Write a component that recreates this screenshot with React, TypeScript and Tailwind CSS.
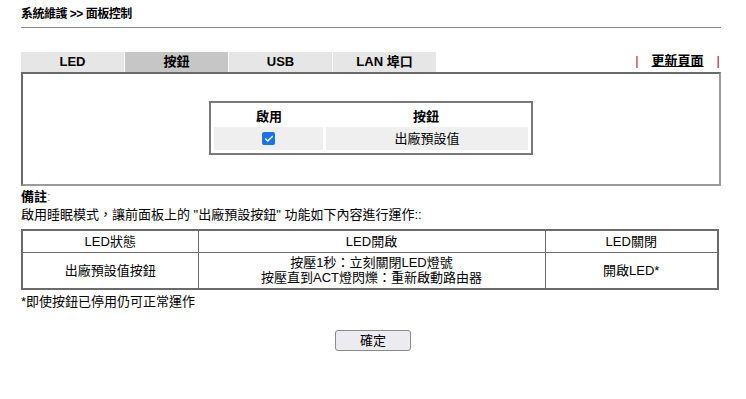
import { Check } from 'lucide-react';

const font = { fontFamily: '"Liberation Sans", Arial, "Noto Sans CJK TC", sans-serif' };

export default function App() {
  const tabs = ['LED', '按鈕', 'USB', 'LAN 埠口'];

  return (
    <div className="w-[746px] h-[399px] bg-white text-black text-[13px]" style={font}>
      <div className="px-[21px] pt-[6px]">
        <h1 className="text-[12px] font-bold leading-[16px] tracking-[-0.5px]">系統維護 &gt;&gt; 面板控制</h1>
        <div className="mt-[5px] h-px bg-[#8a8a8a] w-[700px]" />

        {/* tabs */}
        <div className="mt-[24px] flex h-[20px] w-[699px]">
          {tabs.map((t, i) => (
            <div
              key={t}
              className={
                'w-[103px] mr-px h-[20px] flex items-center justify-center font-bold text-[13px] ' +
                (i === 1 ? 'bg-[#c6c6c6]' : 'bg-[#e6e6e6]')
              }
            >
              {t}
            </div>
          ))}
          <div className="ml-auto flex items-start gap-[13px] h-[20px] leading-[18px] font-bold text-[13px]">
            <span className="text-[#a8102a] font-normal">|</span>
            <span className="underline">更新頁面</span>
            <span className="text-[#a8102a] font-normal">|</span>
          </div>
        </div>

        {/* panel */}
        <div className="w-[700px] h-[114px] border-2 border-[#6b6b6b] border-b-[#9a9a9a] border-r-[#9a9a9a] flex items-start justify-center pt-[27px]">
          <div className="w-[324px] border-2 border-[#7a7a7a] p-[3px]">
            <div className="flex font-bold text-[13px] h-[21px] items-center">
              <div className="w-[110px] text-center">啟用</div>
              <div className="flex-1 text-center">按鈕</div>
            </div>
            <div className="flex gap-[3px] h-[23px]">
              <div className="w-[109px] bg-[#efefef] flex items-center justify-center">
                <span className="w-[13px] h-[13px] rounded-[2px] bg-[#1a73e8] flex items-center justify-center">
                  <Check size={10} strokeWidth={3.5} className="text-white" />
                </span>
              </div>
              <div className="flex-1 bg-[#efefef] flex items-center justify-center">出廠預設值</div>
            </div>
          </div>
        </div>

        {/* notes */}
        <div className="mt-[2px] font-bold leading-[18px]">
          備註<span className="font-normal text-[#888]">:</span>
        </div>
        <div className="leading-[17px]">啟用睡眠模式，讓前面板上的 "出廠預設按鈕" 功能如下內容進行運作::</div>
        <table className="mt-[6px] w-[698px] border-collapse border-2 border-[#6b6b6b] text-[13px]">
          <tbody>
            <tr className="h-[22px]">
              <td className="w-[176px] border border-[#6b6b6b] text-center">LED狀態</td>
              <td className="w-[347px] border border-[#6b6b6b] text-center">LED開啟</td>
              <td className="border border-[#6b6b6b] text-center">LED關閉</td>
            </tr>
            <tr className="h-[37px]">
              <td className="border border-[#6b6b6b] text-center">出廠預設值按鈕</td>
              <td className="border border-[#6b6b6b] text-center leading-[15px]">
                按壓1秒：立刻關閉LED燈號
                <br />
                按壓直到ACT燈閃爍：重新啟動路由器
              </td>
              <td className="border border-[#6b6b6b] text-center">開啟LED*</td>
            </tr>
          </tbody>
        </table>
        <div className="mt-[4px] leading-[16px]">*即使按鈕已停用仍可正常運作</div>

        <div className="mt-[20px] flex justify-center">
          <button className="w-[76px] h-[21px] rounded-[3px] border border-[#8a8a8a] bg-[#ececf0] text-[13px] leading-none">
            確定
          </button>
        </div>
      </div>
    </div>
  );
}
